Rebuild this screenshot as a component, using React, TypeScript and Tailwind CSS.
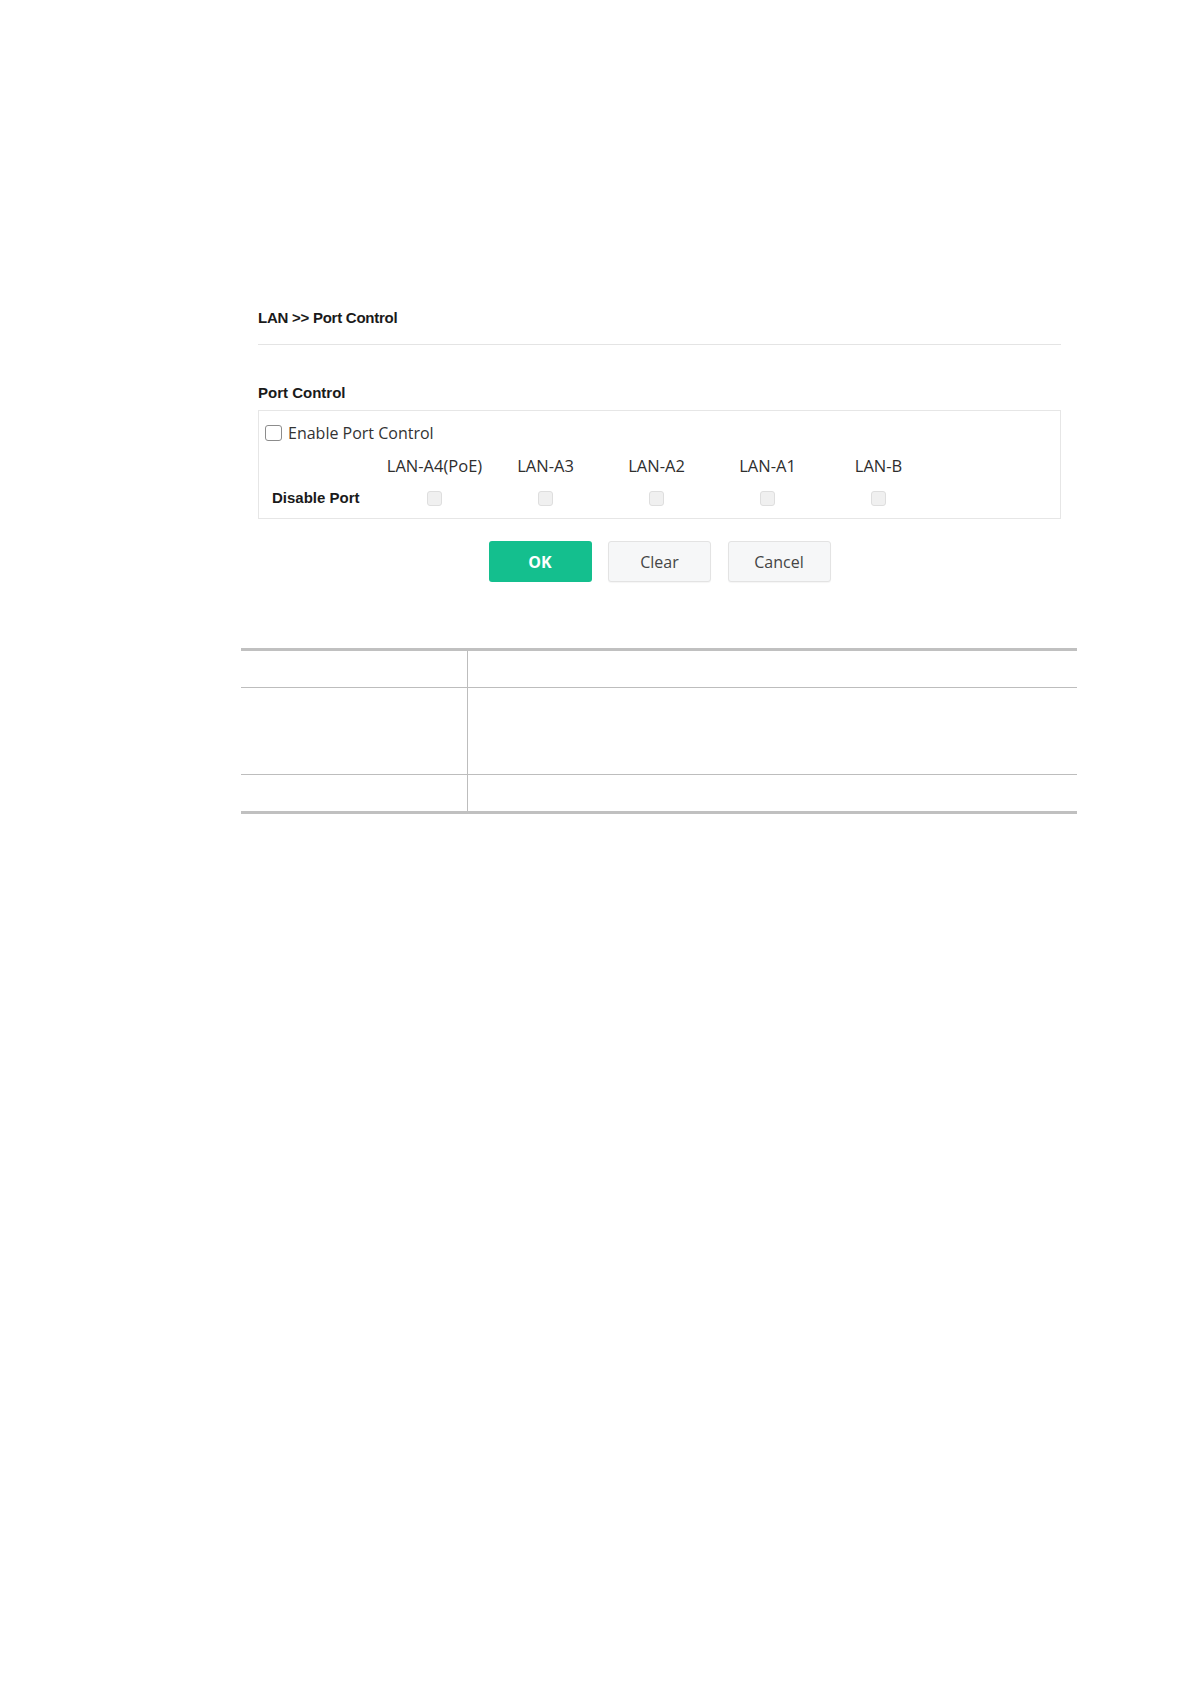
import React from "react";

const ports = ["LAN-A4(PoE)", "LAN-A3", "LAN-A2", "LAN-A1", "LAN-B"];

const arial = { fontFamily: '"Liberation Sans", Arial, sans-serif' };
const open = { fontFamily: '"Open Sans", "Liberation Sans", sans-serif' };

export default function App() {
  return (
    <div className="w-[1190px] min-h-[1684px] bg-white flex flex-col">
      <div className="pt-[308px] pl-[258px] w-[1061px]">
        <div
          className="text-[15px] leading-[20px] font-bold tracking-[-0.25px] text-[#1a1a1a]"
          style={arial}
        >
          LAN &gt;&gt; Port Control
        </div>
        <div className="mt-[16px] h-px bg-[#e4e4e4]" />
        <div
          className="mt-[38px] text-[15px] leading-[20px] font-bold text-[#1a1a1a]"
          style={arial}
        >
          Port Control
        </div>
        <div className="mt-[7px] h-[109px] border border-[#e6e6e6]">
          <div className="pt-[14px] pl-[6px] flex items-center gap-[6px]">
            <span className="w-[17px] h-[16px] rounded-[3px] border border-[#8c8c8c] bg-white" />
            <span
              className="text-[16px] leading-[16px] text-[#333]"
              style={open}
            >
              Enable Port Control
            </span>
          </div>
          <div className="mt-[14px] flex h-[22px] items-center">
            <div className="w-[120px]" />
            {ports.map((p) => (
              <div
                key={p}
                className="w-[111px] text-center text-[16.5px] leading-[22px] text-[#2e2e2e]"
                style={open}
              >
                {p}
              </div>
            ))}
          </div>
          <div className="mt-[11px] flex h-[20px] items-center">
            <div
              className="w-[120px] pl-[13px] text-[15px] leading-[20px] font-bold text-[#1a1a1a]"
              style={arial}
            >
              Disable Port
            </div>
            {ports.map((p) => (
              <div key={p} className="w-[111px] flex justify-center">
                <span className="w-[15px] h-[15px] rounded-[3px] border border-[#dedede] bg-[#f0f0f0]" />
              </div>
            ))}
          </div>
        </div>
        <div className="mt-[22px] flex justify-center gap-[16.5px]" style={open}>
          <button className="w-[103px] h-[41px] rounded-[3px] bg-[#14bf8e] text-white text-[16px] font-bold">
            OK
          </button>
          <button className="w-[103px] h-[41px] rounded-[3px] bg-[#f6f7f8] border border-[#e3e3e3] text-[#454545] text-[16px] font-medium shadow-[0_1px_1px_rgba(0,0,0,0.04)]">
            Clear
          </button>
          <button className="w-[103px] h-[41px] rounded-[3px] bg-[#f6f7f8] border border-[#e3e3e3] text-[#454545] text-[16px] font-medium shadow-[0_1px_1px_rgba(0,0,0,0.04)]">
            Cancel
          </button>
        </div>
      </div>
      <div className="mt-[66px] pl-[241px]">
        <div className="w-[836px] border-t-[3px] border-b-[3px] border-[#c0c0c0]">
          <div className="grid grid-cols-[227px_1fr] h-[37px] border-b border-[#bdbdbd]">
            <div className="border-r border-[#bdbdbd]" />
            <div />
          </div>
          <div className="grid grid-cols-[227px_1fr] h-[87px] border-b border-[#bdbdbd]">
            <div className="border-r border-[#bdbdbd]" />
            <div />
          </div>
          <div className="grid grid-cols-[227px_1fr] h-[36px]">
            <div className="border-r border-[#bdbdbd]" />
            <div />
          </div>
        </div>
      </div>
    </div>
  );
}
